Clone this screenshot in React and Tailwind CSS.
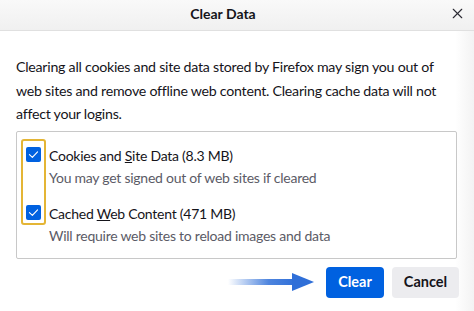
import { X } from "lucide-react"

function Check() {
  return (
    <span className="flex h-[15px] w-[15px] items-center justify-center rounded-[2px] bg-[#0061e0]">
      <svg viewBox="0 0 16 16" className="h-[13px] w-[13px]" fill="none">
        <path d="M3 8.2 6.6 11.6 13 4.8" stroke="white" strokeWidth="1.4" strokeLinecap="round" strokeLinejoin="round" />
      </svg>
    </span>
  )
}

function Option({ label, note }) {
  return (
    <div className="flex flex-col">
      <div className="flex h-[22px] items-center">
        <span className="w-[32px]" />
        <span className="text-[#15141a]">{label}</span>
      </div>
      <div className="flex h-[22px] items-center pl-[32px] text-[#5b5b66]">
        {note}
      </div>
    </div>
  )
}

export default function App() {
  return (
    <div
      className="flex h-[311px] w-[474px] flex-col overflow-hidden bg-white text-[14px] tracking-[-0.25px]"
      style={{ fontFamily: 'Lato, "Noto Sans", sans-serif' }}
    >
      <header className="relative flex h-[31px] shrink-0 items-center justify-center border-b border-[#e0e0e0] bg-gradient-to-b from-[#f9f9f9] to-[#f0f0f0] pb-[3px] pr-[28px]">
        <h1 className="text-[14px] font-bold tracking-normal text-[#15141a]">Clear Data</h1>
        <X className="absolute right-[8px] top-[5px] h-[17px] w-[17px] text-[#2b2a33]" strokeWidth={1.6} />
      </header>

      <div className="flex flex-1 flex-col bg-gradient-to-r from-white from-[96%] to-[#f3f3f3]">
        <p className="whitespace-nowrap px-[16px] pt-[24px] text-[14.2px] leading-[23.5px] text-[#15141a]">
          Clearing all cookies and site data stored by Firefox may sign you out of
          <br />
          web sites and remove offline web content. Clearing cache data will not
          <br />
          affect your logins.
        </p>

        <div className="relative ml-[16px] mr-[17px] mt-[5px] h-[128px] rounded-[2px] border border-[#c8c8c8] bg-white pt-[13px]">
          <div className="absolute left-[4px] top-[7px] h-[86px] w-[25px] rounded-[3px] border-2 border-[#e4b535]" />
          <div className="absolute left-[9px] top-[15px]"><Check /></div>
          <div className="absolute left-[9px] top-[73px]"><Check /></div>
          <div className="flex flex-col gap-[14px] text-[14px]">
            <Option
              label={<>Cookies and <u>S</u>ite Data (8.3 MB)</>}
              note="You may get signed out of web sites if cleared"
            />
            <Option
              label={<>Cached <u>W</u>eb Content (471 MB)</>}
              note="Will require web sites to reload images and data"
            />
          </div>
        </div>

        <div className="flex items-center justify-end gap-[8px] pr-[15px] pt-[8px]">
          <svg width="88" height="22" viewBox="0 0 88 22" className="mr-[2px]">
            <defs>
              <linearGradient id="arrowFade" x1="0" x2="1" y1="0" y2="0">
                <stop offset="0" stopColor="#2f6fd8" stopOpacity="0" />
                <stop offset="0.6" stopColor="#2f6fd8" stopOpacity="0.85" />
                <stop offset="1" stopColor="#2f6fd8" />
              </linearGradient>
            </defs>
            <rect x="0" y="8" width="68" height="6" fill="url(#arrowFade)" />
            <path d="M64 2 L86 11 L64 20 Z" fill="#2f6fd8" />
          </svg>
          <button className="flex h-[31px] w-[58px] items-center justify-center rounded-[4px] bg-[#0061e0] text-[14.5px] font-bold tracking-normal text-white">
            Clear
          </button>
          <button className="flex h-[31px] w-[67px] items-center justify-center rounded-[4px] bg-[#ececef] text-[14.5px] font-bold tracking-normal text-[#15141a]">
            Cancel
          </button>
        </div>
      </div>
    </div>
  )
}
